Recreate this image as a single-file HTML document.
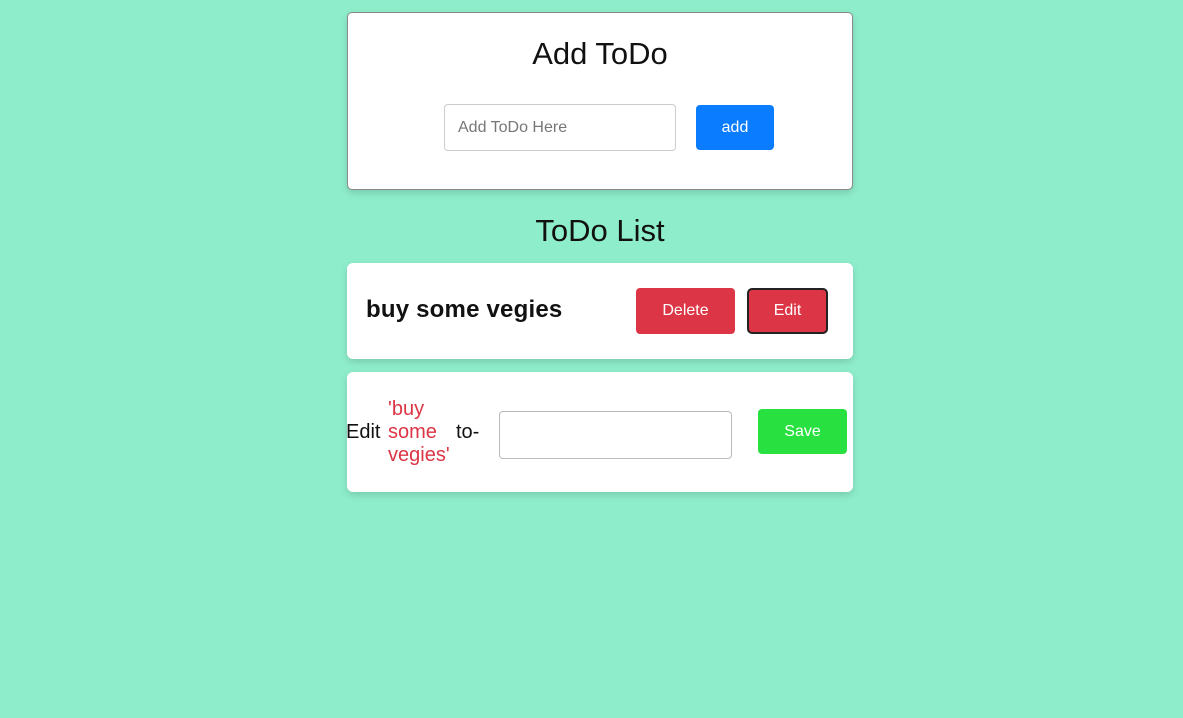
<!DOCTYPE html>
<html><head><style>
body{margin:0;width:1183px;height:718px;background:#8eeecb;font-family:"Liberation Sans",sans-serif;position:relative;overflow:hidden}
.a{position:absolute}
.card{background:#fff;border-radius:6px;box-shadow:0 3px 8px rgba(0,0,0,.15)}
.btn{color:#fff;font-size:16px;display:flex;align-items:center;justify-content:center;border-radius:4px}
</style></head><body>
<div class="a card" style="left:347px;top:12px;width:504px;height:176px;border:1px solid #888;border-radius:5px"></div>
<div class="a" style="left:347px;top:36px;width:506px;text-align:center;font-size:31px;color:#111">Add ToDo</div>
<div class="a" style="left:444px;top:104px;width:232px;height:47px;border:1px solid #ccc;border-radius:4px;box-sizing:border-box;padding-left:13px;line-height:45px;color:#777;font-size:16px">Add ToDo Here</div>
<div class="a btn" style="left:696px;top:105px;width:78px;height:45px;background:#0a7cff">add</div>
<div class="a" style="left:347px;top:213px;width:506px;text-align:center;font-size:31px;color:#111">ToDo List</div>
<div class="a card" style="left:347px;top:263px;width:506px;height:96px"></div>
<div class="a" style="left:366px;top:296px;font-size:24px;letter-spacing:0.2px;font-weight:bold;color:#111">buy some vegies</div>
<div class="a btn" style="left:636px;top:288px;width:99px;height:46px;background:#dc3545">Delete</div>
<div class="a btn" style="left:747px;top:288px;width:81px;height:46px;background:#dc3545;border:2px solid #222;box-sizing:border-box;border-radius:5px">Edit</div>
<div class="a card" style="left:347px;top:372px;width:506px;height:120px"></div>
<div class="a" style="left:346px;top:421px;font-size:20px;color:#111">Edit</div>
<div class="a" style="left:388px;top:398px;font-size:20px;line-height:23px;color:#dc3545">'buy<br>some<br>vegies'</div>
<div class="a" style="left:456px;top:421px;font-size:20px;color:#111">to-</div>
<div class="a" style="left:499px;top:411px;width:233px;height:48px;border:1px solid #bbb;border-radius:4px;box-sizing:border-box"></div>
<div class="a btn" style="left:758px;top:409px;width:89px;height:45px;background:#28e040">Save</div>
</body></html>
